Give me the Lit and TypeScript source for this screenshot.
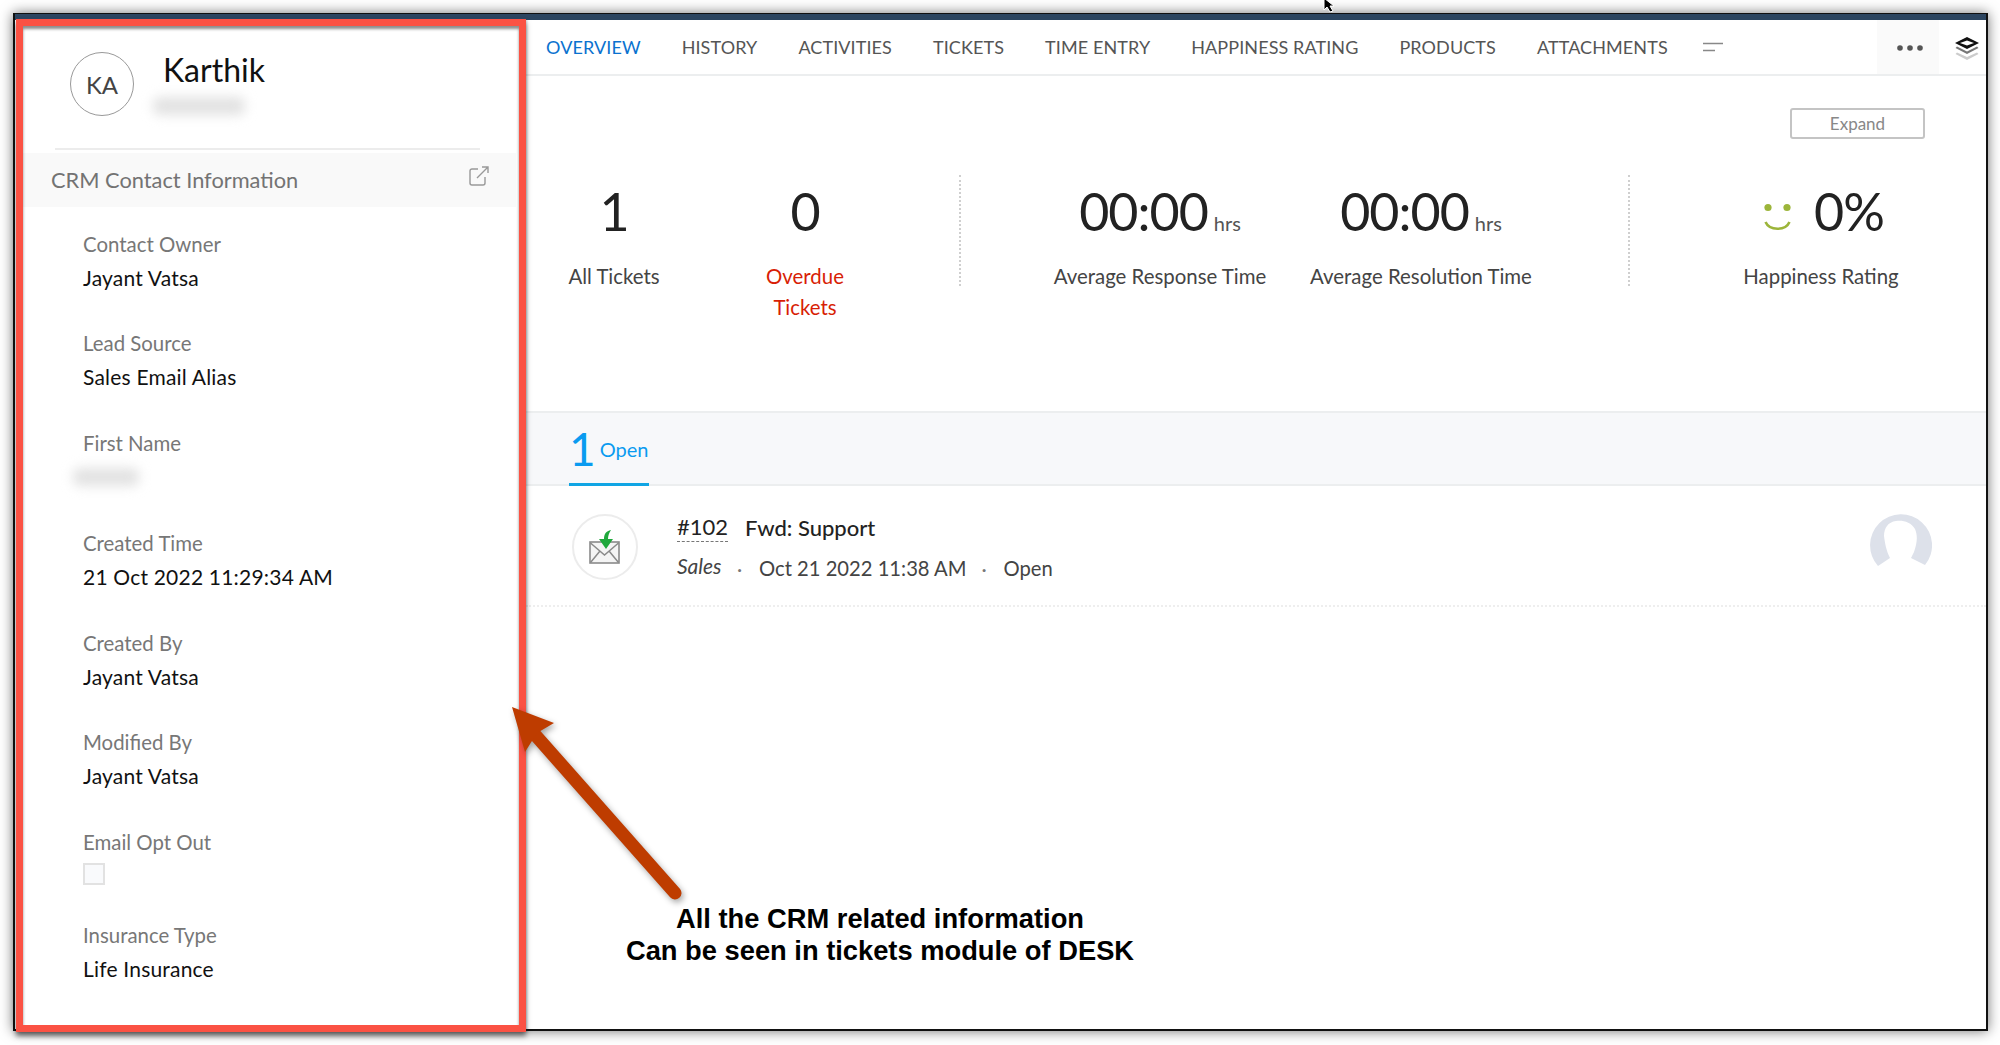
import { LitElement, html, css, svg } from "lit";
import { customElement } from "lit/decorators.js";

const tabs = ["HISTORY", "ACTIVITIES", "TICKETS", "TIME ENTRY", "HAPPINESS RATING", "PRODUCTS", "ATTACHMENTS"];
const fields: [string, string][] = [
  ["Contact Owner", "Jayant Vatsa"],
  ["Lead Source", "Sales Email Alias"],
  ["First Name", ""],
  ["Created Time", "21 Oct 2022 11:29:34 AM"],
  ["Created By", "Jayant Vatsa"],
  ["Modified By", "Jayant Vatsa"],
];

@customElement("app-root")
export class AppRoot extends LitElement {
  static styles = css`
    :host { display: block; position: relative; width: 2000px; height: 1045px; overflow: hidden; background: #fff;
      font-family: Lato, "Open Sans", sans-serif; color: #333; }
    * { box-sizing: border-box; }
    .page { padding: 13px 12px 0 13px; height: 1045px; }
    .win { display: flex; flex-direction: column; height: 1018px; border: 2px solid #111; border-top-width: 1px; border-bottom-width: 2px; background: #fff;
      box-shadow: 0 0 12px rgba(0,0,0,.55); }
    .navy { height: 6px; background: #2c4560; flex: none; }
    .body { display: flex; flex: 1; min-height: 0; }
    .side { width: 511px; flex: none; }
    .head { height: 128px; padding: 32px 0 0 55px; display: flex; position: relative; }
    .avatar { width: 64px; height: 64px; border: 1.5px solid #999; border-radius: 50%; display: flex; align-items: center; justify-content: center; font-size: 24px; color: #444; flex: none; }
    .who { margin-left: 29px; display: flow-root; }
    .name { font-size: 32px; line-height: 38px; color: #111; margin-top: -1px; }
    .blur { background: #e2e2e2; filter: blur(6px); border-radius: 6px; }
    .who .blur { width: 92px; height: 18px; margin: 8px 0 0 -10px; }
    .rule { height: 2px; background: #ececec; margin: 0 46px 0 40px; }
    .strip { margin: 3px 10px 0 8px; height: 54px; background: #f9f9f9; display: flex; align-items: center; justify-content: space-between; padding: 0 27px 2px 28px; font-size: 21.8px; color: #737373; }
    .strip svg { margin-top: -6px; }
    .fields { padding: 19.5px 0 0 68px; }
    .field { padding-bottom: 31.8px; }
    .field.check { padding-bottom: 33px; }
    .lbl { font-size: 20.4px; line-height: 34px; color: #777; }
    .val { font-size: 21px; line-height: 34px; color: #111; height: 34px; letter-spacing: .2px; display: flow-root; }
    .val .blur { width: 66px; height: 18px; margin: 8px 0 0 -10px; }
    .box { width: 22px; height: 22px; margin-top: 4px; border: 2px solid #e2e2e2; background: #f9fafc; }
    .main { flex: 1; min-width: 0; display: flex; flex-direction: column; }
    .tabs { height: 56px; flex: none; border-bottom: 2px solid #eceeef; display: flex; align-items: center; padding-left: 20px; gap: 41px; font-size: 18px; letter-spacing: .1px; color: #555; position: relative; }
    .tabs .on { color: #0a72cf; }
    .tabs .menu { margin-left: -6px; }
    .more { margin-left: auto; display: flex; align-items: center; height: 100%; }
    .dots { width: 62px; height: 100%; background: #fafafa; display: flex; align-items: center; justify-content: center; padding: 2px 0 0 3px; }
    .layers { width: 47px; display: flex; justify-content: center; padding: 2px 0 0 9px; }
    .expand-row { display: flex; justify-content: flex-end; padding: 32px 61px 0 0; }
    .expand { width: 135px; height: 31px; border: 2px solid #c4c4c4; border-radius: 3px; font-size: 17px; color: #888; display: flex; align-items: center; justify-content: center; background: #fff; }
    .stats { display: grid; grid-template-columns: 176px 206px 104px 296px 226px 190px 194px; margin-top: 42px; height: 230px; align-content: start; text-align: center; }
    .num { font-size: 52px; line-height: 60px; letter-spacing: -1px; color: #222; height: 60px; display: flex; justify-content: center; align-items: baseline; }
    .num small { font-size: 20px; letter-spacing: 0; margin-left: 6px; color: #555; }
    .slab { font-size: 20.4px; line-height: 31px; margin-top: 20px; color: #444; white-space: nowrap; }
    .red { color: #d81e05; }
    .divider { justify-self: center; width: 0; height: 111px; margin-top: -6px; border-left: 2px dotted #cfcfcf; }
    .hap .num { padding-left: 6px; }
    .smile { margin: 12px 23px 0 0; align-self: center; }
    .tstrip { height: 75px; flex: none; background: #f7f8fa; border-top: 2px solid #eceeef; border-bottom: 2px solid #eceeef; padding-left: 43px; }
    .opentab { display: inline-flex; align-items: center; gap: 4px; height: 73px; padding: 2px 0 0 0; width: 80px; border-bottom: 3px solid #10a5e4; color: #0a9bf0; font-size: 20px; }
    .opentab b { font-weight: 400; font-size: 46px; line-height: 60px; }
    .ticket { height: 121px; flex: none; border-bottom: 2px dotted #eee; display: flex; position: relative; padding: 28px 0 0 46px; }
    .ticon { width: 66px; height: 66px; border: 2px solid #ececec; border-radius: 50%; display: flex; align-items: center; justify-content: center; flex: none; }
    .tbody { margin-left: 39px; }
    .tline1 { display: flex; gap: 17px; font-size: 22px; line-height: 30px; color: #222; font-weight: 500; margin-top: -1px; }
    .tid { font-weight: 400; border-bottom: 1.5px dashed #777; height: 29px; line-height: 27px; }
    .tline2 { display: flex; font-size: 20.2px; line-height: 30px; color: #444; margin-top: 10px; }
    .tline2 i { width: 46px; margin-right: 14px; font-size: 21px; margin-top: -2px; }
    .sep { width: 8px; margin-right: 14px; color: #777; font-size: 20px; }
    .sep.two { margin-left: 15px; }
    .person { position: absolute; right: 54px; top: 25px; }
    .mark { position: absolute; left: 16px; top: 19px; width: 510px; height: 1013px; border: 7px solid #fb5244;
      box-shadow: 0 4px 5px rgba(0,0,0,.5), inset 0 3px 3px rgba(0,0,0,.45), 1px 0 2px rgba(60,90,110,.25); pointer-events: none; }
    .arrow { position: absolute; left: 0; top: 0; filter: drop-shadow(2px 3px 3px rgba(0,0,0,.35)); }
    .note { position: absolute; left: 480px; top: 903px; width: 800px; text-align: center; font-family: "Liberation Sans", Arial, sans-serif; font-weight: 700; font-size: 27.3px; line-height: 32px; color: #000; }
    .cursor { position: absolute; left: 1322px; top: -2px; }
  `;

  render() {
    return html`
      <div class="page"><div class="win">
        <div class="navy"></div>
        <div class="body">
          <aside class="side">
            <div class="head">
              <div class="avatar">KA</div>
              <div class="who"><div class="name">Karthik</div><div class="blur"></div></div>
            </div>
            <div class="rule"></div>
            <div class="strip">CRM Contact Information
              <svg width="20" height="20" viewBox="0 0 20 20" fill="none" stroke="#999" stroke-width="1.4">
                <path d="M9 3H3a2 2 0 0 0-2 2v12a2 2 0 0 0 2 2h11a2 2 0 0 0 2-2v-6" /><path d="M8 12 19 1M13 1h6v6" />
              </svg>
            </div>
            <div class="fields">
              ${fields.map(([l, v]) => html`<div class="field"><div class="lbl">${l}</div>
                <div class="val">${v ? v : html`<div class="blur"></div>`}</div></div>`)}
              <div class="field check"><div class="lbl">Email Opt Out</div><div class="box"></div></div>
              <div class="field"><div class="lbl">Insurance Type</div><div class="val">Life Insurance</div></div>
            </div>
          </aside>
          <main class="main">
            <nav class="tabs">
              <span class="on">OVERVIEW</span>
              ${tabs.map((t) => html`<span>${t}</span>`)}
              <svg class="menu" width="20" height="10" viewBox="0 0 20 10" stroke="#888" stroke-width="1.6"><path d="M0 1.5h20M0 8.5h12" /></svg>
              <div class="more">
                <div class="dots"><svg width="26" height="6" viewBox="0 0 26 6" fill="#555"><circle cx="3" cy="3" r="2.8" /><circle cx="13" cy="3" r="2.8" /><circle cx="23" cy="3" r="2.8" /></svg></div>
                <div class="layers"><svg width="24" height="23" viewBox="0 0 24 23">
                  <path d="M12 0 24 6 12 12 0 6Z" fill="#111" /><path d="M12 3.6 19 6 12 8.6 5 6Z" fill="#fff" />
                  <path d="M2 9.5 12 14.5 22 9.5 23.5 11 12 17 .5 11Z" fill="#777" />
                  <path d="M2 15.5 12 20 22 15.5 23.5 17 12 23 .5 17Z" fill="#ccc" />
                </svg></div>
              </div>
            </nav>
            <div class="expand-row"><div class="expand">Expand</div></div>
            <section class="stats">
              <div><div class="num">1</div><div class="slab">All Tickets</div></div>
              <div><div class="num">0</div><div class="slab red">Overdue<br />Tickets</div></div>
              <div class="divider"></div>
              <div><div class="num">00:00<small>hrs</small></div><div class="slab">Average Response Time</div></div>
              <div><div class="num">00:00<small>hrs</small></div><div class="slab">Average Resolution Time</div></div>
              <div class="divider"></div>
              <div class="hap">
                <div class="num"><svg class="smile" width="27" height="28" viewBox="0 0 27 28" fill="none">
                  <circle cx="4" cy="4.5" r="3.6" fill="#9cb53a" /><circle cx="23" cy="4.5" r="3.6" fill="#9cb53a" />
                  <path d="M1.5 19c4 9 20 9 24 0" stroke="#9cb53a" stroke-width="2.6" /></svg>0%</div>
                <div class="slab">Happiness Rating</div>
              </div>
            </section>
            <div class="tstrip"><div class="opentab"><b>1</b>Open</div></div>
            <div class="ticket">
              <div class="ticon"><svg width="32" height="34" viewBox="0 0 32 34">
                <rect x="1" y="12" width="29" height="21" fill="#f4f4f4" stroke="#8a8a8a" stroke-width="1.6" />
                <path d="M1.5 13 15.5 25 29.5 13M1.5 32.5 11 21M29.5 32.5 20 21" fill="none" stroke="#8a8a8a" stroke-width="1.5" />
                <path d="M22 0c-5 1-7 4-7 9H10l7 10 7-10h-5c0-3 1-6 3-9Z" fill="#1fa83c" />
              </svg></div>
              <div class="tbody">
                <div class="tline1"><span class="tid">#102</span><span>Fwd: Support</span></div>
                <div class="tline2"><i>Sales</i><span class="sep">·</span><span>Oct 21 2022 11:38 AM</span><span class="sep two">·</span><span>Open</span></div>
              </div>
              <svg class="person" width="64" height="58" viewBox="69 30 64 58">
                <path d="M79 85A31 31 0 1 1 126 84L112 77 115 71C118 62 119 55 116 48 112 41 104 39 97 40 89 41 85 47 85 55 86 62 87 69 91 77Z" fill="#dde1ea" />
              </svg>
            </div>
          </main>
        </div>
      </div></div>
      <div class="mark"></div>
      <svg class="arrow" width="720" height="920" viewBox="0 0 720 920">
        ${svg`<path d="M530 729 675 893" stroke="#be3c00" stroke-width="13" stroke-linecap="round" fill="none" />
        <path d="M512 707 554 723 537 733 525 752Z" fill="#be3c00" />`}
      </svg>
      <div class="note">All the CRM related information<br />Can be seen in tickets module of DESK</div>
      <svg class="cursor" width="16" height="14" viewBox="0 0 16 14">
        <path d="M2 0 2 12 5 9 8 14 11 13 8 8 12 8Z" fill="#000" stroke="#fff" stroke-width="1" />
      </svg>
    `;
  }
}
